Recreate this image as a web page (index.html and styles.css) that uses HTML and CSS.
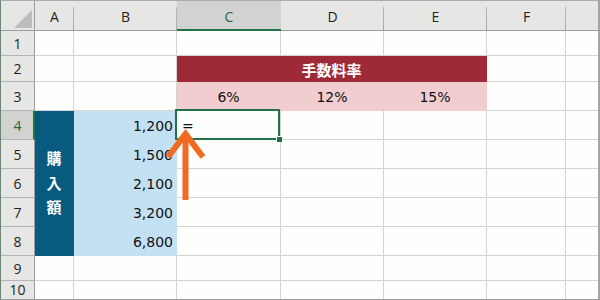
FILE: index.html
```html
<!DOCTYPE html>
<html lang="ja">
<head>
<meta charset="utf-8">
<link rel="stylesheet" href="styles.css">
</head>
<body>
<div class="sheet">
  <div class="grid">
    <!-- header row -->
    <div class="hd corner"><svg width="18" height="18" viewBox="0 0 18 18"><polygon points="0,18 18,18 18,0" fill="#bcbcbc"/></svg></div>
    <div class="hd col">A</div>
    <div class="hd col">B</div>
    <div class="hd col sel-col">C</div>
    <div class="hd col">D</div>
    <div class="hd col">E</div>
    <div class="hd col">F</div>
    <div class="hd col last"></div>

    <!-- row 1 -->
    <div class="hd row">1</div>
    <div class="c"></div><div class="c"></div><div class="c"></div><div class="c"></div><div class="c"></div><div class="c"></div><div class="c last"></div>

    <!-- row 2 -->
    <div class="hd row">2</div>
    <div class="c"></div><div class="c"></div>
    <div class="c title">手数料率</div>
    <div class="c"></div><div class="c last"></div>

    <!-- row 3 -->
    <div class="hd row">3</div>
    <div class="c"></div><div class="c"></div>
    <div class="c rate">6%</div>
    <div class="c rate">12%</div>
    <div class="c rate">15%</div>
    <div class="c"></div><div class="c last"></div>

    <!-- row 4 -->
    <div class="hd row sel-row">4</div>
    <div class="c label"><span>購</span><span>入</span><span>額</span></div>
    <div class="c num">1,200</div>
    <div class="c active"><span class="eq">=</span><div class="cursor"><div class="handle"></div></div></div>
    <div class="c"></div><div class="c"></div><div class="c"></div><div class="c last"></div>

    <!-- row 5 -->
    <div class="hd row">5</div>
    <div class="c num">1,500</div>
    <div class="c"></div><div class="c"></div><div class="c"></div><div class="c"></div><div class="c last"></div>

    <!-- row 6 -->
    <div class="hd row">6</div>
    <div class="c num">2,100</div>
    <div class="c"></div><div class="c"></div><div class="c"></div><div class="c"></div><div class="c last"></div>

    <!-- row 7 -->
    <div class="hd row">7</div>
    <div class="c num">3,200</div>
    <div class="c"></div><div class="c"></div><div class="c"></div><div class="c"></div><div class="c last"></div>

    <!-- row 8 -->
    <div class="hd row">8</div>
    <div class="c num">6,800</div>
    <div class="c"></div><div class="c"></div><div class="c"></div><div class="c"></div><div class="c last"></div>

    <!-- row 9 -->
    <div class="hd row">9</div>
    <div class="c"></div><div class="c"></div><div class="c"></div><div class="c"></div><div class="c"></div><div class="c"></div><div class="c last"></div>

    <!-- row 10 -->
    <div class="hd row bottom">10</div>
    <div class="c bottom"></div><div class="c bottom"></div><div class="c bottom"></div><div class="c bottom"></div><div class="c bottom"></div><div class="c bottom"></div><div class="c bottom last"></div>
  </div>
  <svg class="arrow" width="600" height="300" viewBox="0 0 600 300">
    <g fill="none" stroke="#f26a21" stroke-width="6" stroke-linejoin="miter" stroke-linecap="butt">
      <line x1="185.5" y1="137" x2="185.5" y2="200"/>
      <polyline points="168,157 185.5,134 203,157"/>
    </g>
  </svg>
</div>
</body>
</html>
```

FILE: styles.css
```css
html, body {
  margin: 0;
  padding: 0;
  background: #ffffff;
}

.sheet {
  position: relative;
  width: 600px;
  height: 300px;
  box-sizing: border-box;
  border-top: 1px solid #acacac;
  border-left: 1px solid #6c8576;
  border-bottom: 1px solid #9c9c9c;
  border-right: 2px solid #a4a4a4;
  background: #fefefc;
  overflow: hidden;
}

.grid {
  display: grid;
  grid-template-columns: 34px 39px 103px 104px 103px 103px 79px 32px;
  grid-template-rows: 30px 25px 26px 29px 29px 29px 29px 29px 29px 25px 18px;
}

.grid > div {
  box-sizing: border-box;
  min-width: 0;
}

.hd {
  background: #e6e6e4;
  color: #222222;
  font-family: "Open Sans", "Liberation Sans", sans-serif;
  font-size: 14px;
  display: flex;
  align-items: center;
  justify-content: center;
}

.hd.corner {
  justify-content: flex-end;
  align-items: flex-end;
  padding: 0 2px 2px 0;
  border-right: 1px solid #9e9e9e;
  border-bottom: 1px solid #9e9e9e;
}

.hd.col {
  border-bottom: 1px solid #9e9e9e;
  background: linear-gradient(#b8b8b8, #a8a8a8) right bottom / 1px 80% no-repeat, #e6e6e4;
  padding-top: 1px;
}

.hd.col.last {
  background: #e6e6e4;
}

.hd.sel-col {
  background: #d2d2d0;
  border-bottom: 2px solid #217346;
  color: #1e6b43;
  padding-top: 2px;
}

.hd.row {
  border-right: 1px solid #9e9e9e;
  border-bottom: 1px solid #b4b4b4;
}

.hd.row.bottom {
  border-bottom: none;
  align-items: flex-end;
}

.hd.sel-row {
  background: #d2d2d0;
  border-right: 2px solid #217346;
  color: #1e6b43;
  padding-left: 1px;
}

.c {
  border-right: 1px solid #d4d4d4;
  border-bottom: 1px solid #d4d4d4;
  font-family: "DejaVu Sans", "Noto Sans CJK JP", sans-serif;
  font-size: 14px;
  color: #111111;
  display: flex;
  align-items: center;
}

.c.last {
  border-right: none;
}

.c.bottom {
  border-bottom: none;
}

.title {
  grid-column: span 3;
  background: #9e2a37;
  border-color: #9e2a37;
  color: #ffffff;
  font-family: "Noto Sans CJK JP", sans-serif;
  font-weight: bold;
  font-size: 15px;
  justify-content: center;
  padding-top: 1px;
}

.rate {
  background: #f2cdcf;
  border-color: #f2cdcf;
  justify-content: center;
  padding-top: 2px;
}

.label {
  grid-row: span 5;
  background: #085a7f;
  border-color: #085a7f;
  color: #ffffff;
  font-family: "Noto Sans CJK JP", sans-serif;
  font-weight: bold;
  font-size: 15px;
  flex-direction: column;
  justify-content: center;
  gap: 2px;
  line-height: 22.5px;
}

.num {
  background: #c4e1f3;
  border-color: #c4e1f3;
  justify-content: flex-end;
  padding-right: 3px;
  padding-top: 2px;
}

.active {
  position: relative;
  padding-left: 5px;
  padding-top: 1px;
}

.cursor {
  position: absolute;
  left: -2px;
  top: -2px;
  right: 0;
  bottom: -1px;
  border: 2px solid #217346;
}

.handle {
  position: absolute;
  right: -4px;
  bottom: -4px;
  width: 5px;
  height: 5px;
  background: #217346;
  box-shadow: -1px -1px 0 #ffffff;
}

.arrow {
  position: absolute;
  left: -1px;
  top: -1px;
  pointer-events: none;
}
```
